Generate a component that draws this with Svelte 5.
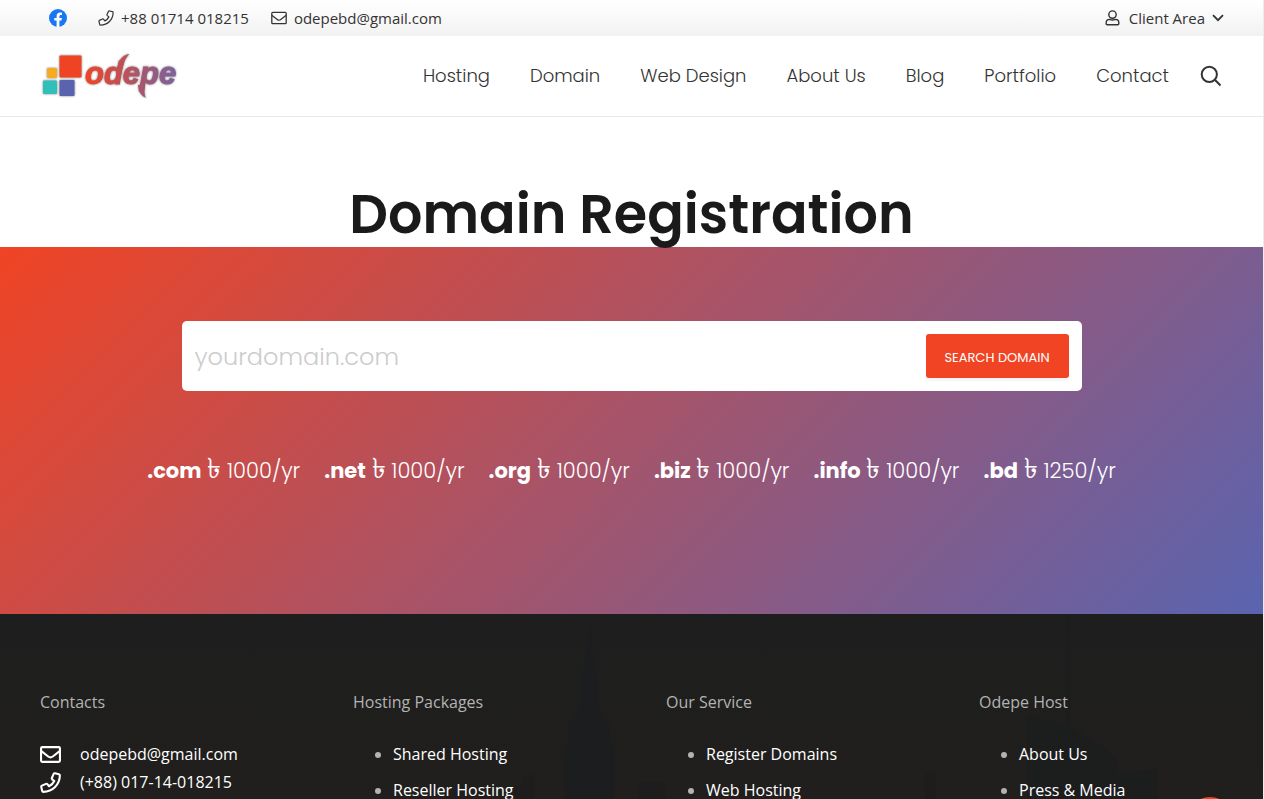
<script lang="ts">
  const navLinks = ["Hosting", "Domain", "Web Design", "About Us", "Blog", "Portfolio", "Contact"];

  const prices = [
    { tld: ".com", price: 1000 },
    { tld: ".net", price: 1000 },
    { tld: ".org", price: 1000 },
    { tld: ".biz", price: 1000 },
    { tld: ".info", price: 1000 },
    { tld: ".bd", price: 1250 },
  ];

  const footerColumns = [
    { title: "Hosting Packages", links: ["Shared Hosting", "Reseller Hosting"] },
    { title: "Our Service", links: ["Register Domains", "Web Hosting"] },
    { title: "Odepe Host", links: ["About Us", "Press & Media"] },
  ];

  let domain = $state("");
</script>

{#snippet phoneIcon(size: number, weight: number)}
  <svg width={size} height={size} viewBox="0 0 20 20" fill="none" stroke="currentColor" stroke-width={weight} stroke-linejoin="round">
    <path d="M14.3 1.2 18 2.1q.9.2.9 1.1C18.9 12 12 18.9 3.2 18.9q-.9 0-1.1-.9L1.2 14.3q-.2-.9.6-1.3l3.9-1.7q.8-.3 1.3.3l1.6 2q3.4-1.6 5-5l-2-1.6q-.6-.5-.3-1.3L13 1.8q.4-.8 1.3-.6z" />
  </svg>
{/snippet}

{#snippet mailIcon(size: number, weight: number)}
  <svg width={size} height={size} viewBox="0 0 20 20" fill="none" stroke="currentColor" stroke-width={weight} stroke-linejoin="round">
    <rect x="1" y="3" width="18" height="14" rx="1.2" />
    <path d="M1 6.5l6.8 5.4q2.2 1.7 4.4 0L19 6.5" />
  </svg>
{/snippet}

<div class="page">
  <div class="topbar">
    <div class="topbar-left">
      <a class="social" href="#facebook" aria-label="Facebook">
        <svg width="18" height="18" viewBox="0 0 18 18">
          <circle cx="9" cy="9" r="9" fill="#1877f2" />
          <path d="M7.6 18v-6.4H5.3V9h2.3V7c0-2.3 1.4-3.5 3.4-3.5 1 0 2 .2 2 .2v2.2h-1.1c-1.1 0-1.5.7-1.5 1.4V9h2.5l-.4 2.6h-2.1V18z" fill="#fff" />
        </svg>
      </a>
      <a class="top-link phone" href="tel:+8801714018215">{@render phoneIcon(16, 1.5)}+88 01714 018215</a>
      <a class="top-link" href="mailto:odepebd@gmail.com">{@render mailIcon(16, 1.6)}odepebd@gmail.com</a>
    </div>
    <button class="client" type="button">
      <svg width="15" height="16" viewBox="0 0 15 16" fill="none" stroke="currentColor" stroke-width="1.4" stroke-linejoin="round">
        <circle cx="7.5" cy="4.6" r="3.7" />
        <path d="M4.5 9.4q3 1.3 6 0c2 0 3.3 1.4 3.3 3.4v.9q0 1-1 1H2.2q-1 0-1-1v-.9c0-2 1.3-3.4 3.3-3.4z" />
      </svg>
      Client Area
      <svg class="chevron" width="12" height="8" viewBox="0 0 12 8" fill="none" stroke="currentColor" stroke-width="1.8">
        <path d="M1 1.2l5 5 5-5" />
      </svg>
    </button>
  </div>

  <header class="header">
    <a class="logo" href="#home" aria-label="Odepe home">
      <svg width="140" height="50" viewBox="0 0 140 50">
        <defs>
          <linearGradient id="brand" gradientUnits="userSpaceOnUse" x1="45" y1="0" x2="138" y2="0">
            <stop offset="0" stop-color="#f04424" />
            <stop offset="1" stop-color="#7862a0" />
          </linearGradient>
        </defs>
        <rect x="19.5" y="4.5" width="22" height="22" rx="1" fill="#ef4423" />
        <rect x="7" y="17" width="10" height="10" rx="1" fill="#f6ac22" />
        <rect x="3" y="29.5" width="14" height="13.5" rx="1" fill="#30bfb9" />
        <rect x="19.5" y="29" width="15" height="16" rx="1" fill="#5a64ae" />
        <text class="wordmark" x="45" y="33" fill="url(#brand)" stroke="url(#brand)">odepe</text>
        <path d="M77 18Q79 4.5 89.5 3 84.5 7 82.5 18z" fill="url(#brand)" />
        <path d="M98 34Q98.5 44 106 47 103.5 43 105 34z" fill="url(#brand)" />
      </svg>
    </a>
    <nav class="nav">
      {#each navLinks as link}
        <a href="#{link}">{link}</a>
      {/each}
    </nav>
    <button class="search-toggle" type="button" aria-label="Search">
      <svg width="22" height="22" viewBox="0 0 22 22" fill="none" stroke="currentColor" stroke-width="2">
        <circle cx="9.3" cy="9.3" r="7.6" />
        <path d="M14.8 14.8l5.7 5.7" />
      </svg>
    </button>
  </header>

  <main>
    <h1>Domain Registration</h1>

    <section class="hero">
      <form class="domain-form">
        <input type="text" bind:value={domain} placeholder="yourdomain.com" aria-label="Domain name" />
        <button type="button">SEARCH DOMAIN</button>
      </form>
      <ul class="prices">
        {#each prices as item}
          <li><strong>{item.tld}</strong> <span class="taka">৳</span> {item.price}/yr</li>
        {/each}
      </ul>
    </section>
  </main>

  <footer class="footer">
    <svg class="skyline" viewBox="0 0 1264 185" aria-hidden="true">
      <path d="M590 10h2l1 44 4 6 1 30 7 14 6 6v18l4 6v51h-50v-51l4-6v-18l6-6 5-14 1-30 4-6z" fill="#1c1d1e" />
      <path d="M1067 0h3v112l22 14 14 8 12 12v12l40-2v29h-130v-84l32 8 7 4z" fill="#1c1d1d" />
      <path d="M515 185v-12h8v-12h12v24zM640 185v-16h26v16zM926 185v-28h10v28z" fill="#1d1d1d" />
    </svg>
    <div class="footer-grid">
      <div>
        <h2>Contacts</h2>
        <ul class="contacts">
          <li>{@render mailIcon(21, 2)}<a href="mailto:odepebd@gmail.com">odepebd@gmail.com</a></li>
          <li>{@render phoneIcon(21, 2)}<a href="tel:+8801714018215">(+88) 017-14-018215</a></li>
        </ul>
      </div>
      {#each footerColumns as column}
        <div>
          <h2>{column.title}</h2>
          <ul class="links">
            {#each column.links as link}
              <li><a href="#{link}">{link}</a></li>
            {/each}
          </ul>
        </div>
      {/each}
    </div>
  </footer>

  <button class="to-top" type="button" aria-label="Back to top"></button>
</div>

<style>
  :global(body) {
    margin: 0;
    background: #fff;
  }

  .page {
    display: flex;
    flex-direction: column;
    height: 100vh;
    overflow: hidden;
    box-sizing: border-box;
    border-right: 1px solid #ececec;
    font-family: "Open Sans", "Noto Sans", sans-serif;
    font-size: 16px;
    line-height: 28px;
    color: #333;
  }

  a {
    color: inherit;
    text-decoration: none;
  }
  button {
    border: 0;
    padding: 0;
    background: none;
    font: inherit;
    color: inherit;
    cursor: pointer;
  }
  ul {
    list-style: none;
    margin: 0;
    padding: 0;
  }
  svg {
    display: block;
    flex: none;
  }

  .topbar {
    display: flex;
    flex: none;
    align-items: center;
    justify-content: space-between;
    height: 36px;
    padding: 0 39px 0 49px;
    background: linear-gradient(#fff, #f2f2f2);
    font-size: 15px;
  }
  .topbar-left,
  .top-link,
  .client {
    display: flex;
    align-items: center;
  }
  .topbar-left {
    gap: 22px;
  }
  .top-link {
    gap: 7px;
  }
  .phone {
    margin-left: 9px;
  }
  .client {
    gap: 9px;
  }
  .chevron {
    margin-left: -2px;
  }

  .header {
    display: flex;
    flex: none;
    align-items: center;
    height: 80px;
    padding: 0 41px 0 40px;
    border-bottom: 1px solid #e8e8e8;
  }
  .logo {
    margin-right: auto;
  }
  .logo svg {
    filter: drop-shadow(0 0 1px rgba(0, 0, 0, 0.5));
  }
  .wordmark {
    font: italic 700 31px "Liberation Sans", Arial, sans-serif;
    stroke-width: 1px;
  }
  .nav {
    display: flex;
    gap: 40px;
    font-family: Poppins, Inter, sans-serif;
    font-size: 18px;
    font-weight: 300;
  }
  .search-toggle {
    margin-left: 31px;
  }

  h1 {
    height: 60px;
    margin: 70px 0 0;
    font-family: Poppins, Inter, sans-serif;
    font-size: 54px;
    font-weight: 600;
    line-height: 54px;
    text-align: center;
    color: #1a1a1a;
  }

  .hero {
    padding: 74px 40px 126px;
    background: linear-gradient(135deg, #f04424, #5a64b0);
  }
  .domain-form {
    display: flex;
    align-items: center;
    box-sizing: border-box;
    max-width: 900px;
    height: 70px;
    margin: 0 auto 62px;
    padding: 0 13px;
    border-radius: 5px;
    background: #fff;
  }
  .domain-form input {
    flex: 1;
    min-width: 0;
    padding: 0;
    border: 0;
    outline: none;
    background: none;
    font-family: Poppins, Inter, sans-serif;
    font-size: 24px;
    font-weight: 300;
    color: #333;
  }
  .domain-form input::placeholder {
    color: #ccc;
    opacity: 1;
  }
  .domain-form button {
    width: 143px;
    height: 44px;
    padding-top: 3px;
    border-radius: 3px;
    background: #f04424;
    box-shadow: 0 3px 2px rgba(0, 0, 0, 0.04);
    font-family: Poppins, Inter, sans-serif;
    font-size: 13px;
    color: #fff;
  }

  .prices {
    display: flex;
    justify-content: center;
    gap: 24px;
    font-family: Poppins, Inter, sans-serif;
    font-size: 21px;
    font-weight: 300;
    line-height: 35px;
    white-space: nowrap;
    color: #fff;
  }
  .prices strong {
    font-weight: 700;
  }
  .taka {
    font-size: 28px;
    line-height: 1;
  }

  .footer {
    position: relative;
    flex: 1;
    padding: 74px 40px 0;
    background: linear-gradient(#1e1e1e, #201f1d);
    color: #fff;
  }
  .skyline {
    position: absolute;
    top: 0;
    left: 0;
    width: 100%;
  }
  .footer-grid {
    position: relative;
    display: grid;
    grid-template-columns: repeat(4, 1fr);
    gap: 69px;
  }
  .footer h2 {
    margin: 0 0 24px;
    font-size: 16px;
    font-weight: 400;
    line-height: 28px;
    color: #b3b3b3;
  }
  .contacts li {
    display: flex;
    align-items: center;
    gap: 19px;
  }
  .links li {
    position: relative;
    margin-bottom: 8px;
    padding-left: 40px;
  }
  .links li::before {
    content: "";
    position: absolute;
    top: 12px;
    left: 22px;
    width: 6px;
    height: 6px;
    border-radius: 50%;
    background: #b3b3b3;
  }

  .to-top {
    position: fixed;
    right: 29px;
    bottom: -48px;
    width: 50px;
    height: 50px;
    border-radius: 50%;
    background: #f04424;
  }
</style>
